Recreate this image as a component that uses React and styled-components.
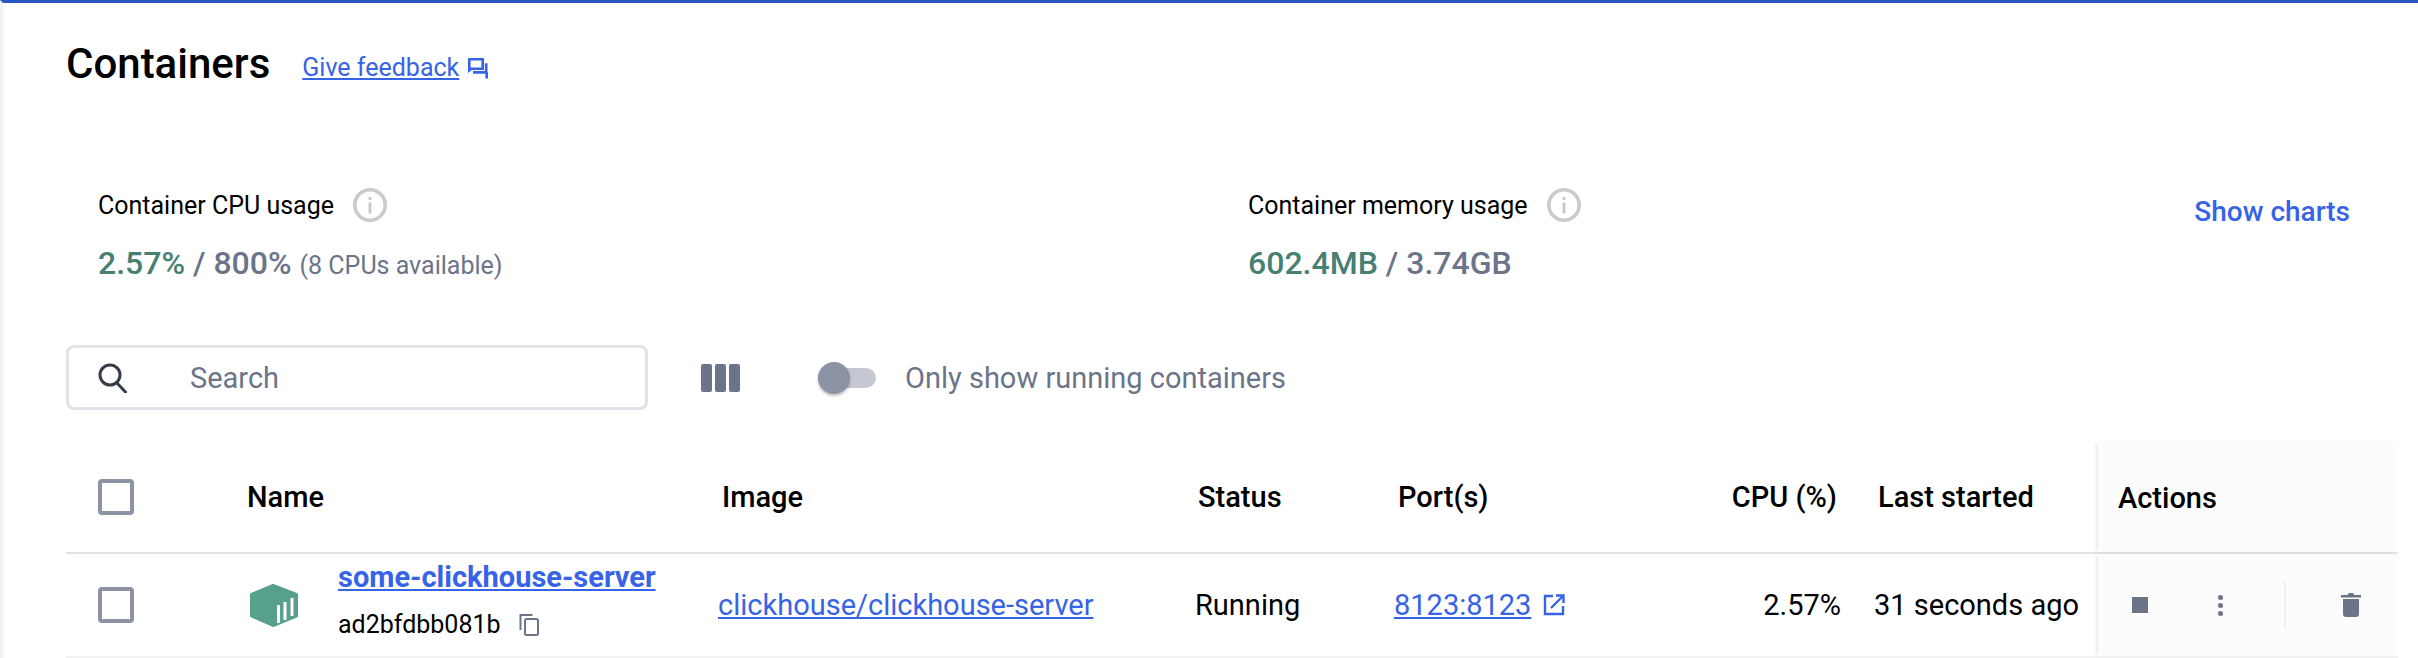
import React from 'react';
import styled, { createGlobalStyle } from 'styled-components';

const GlobalStyle = createGlobalStyle`
  html, body {
    margin: 0;
    background: #fff;
    overflow: hidden;
  }
  body {
    font-family: Roboto, "Liberation Sans", sans-serif;
    color: #000;
  }
`;

const COLUMNS = '181px 471px 477px 199px 240px 235px 229px 300px';
const BLUE = '#3763e6';
const SLATE = '#6b7489';

const Page = styled.div`
  width: 2418px;
  height: 658px;
  box-sizing: border-box;
  border-top: 3px solid #2a55c5;
  border-left: 3px solid #f3f3f3;
  padding: 37px 20px 0 63px;
  overflow: hidden;
`;

const Heading = styled.div`
  display: flex;
  align-items: center;
  height: 48px;
`;

const Title = styled.h1`
  margin: 0;
  font-size: 42px;
  line-height: 48px;
  font-weight: 500;
  letter-spacing: 0;
`;

const Feedback = styled.a`
  display: flex;
  align-items: center;
  gap: 9px;
  margin: 8px 0 0 32px;
  color: ${BLUE};
  font-size: 25px;
  line-height: 30px;
  span {
    text-decoration: underline;
  }
`;

const Stats = styled.div`
  display: flex;
  margin-top: 100px;
  padding: 0 48px 0 32px;
`;

const Stat = styled.div`
  width: ${props => props.$width}px;
`;

const StatLabel = styled.div`
  display: flex;
  align-items: center;
  gap: 19px;
  height: 34px;
  font-size: 25px;
`;

const StatValue = styled.div`
  margin-top: 21px;
  height: 40px;
  line-height: 40px;
  font-size: 32px;
  font-weight: 500;
  color: ${SLATE};
`;

const Used = styled.span`
  color: #477f72;
`;

const StatNote = styled.span`
  margin-left: 8px;
  font-size: 25px;
  font-weight: 400;
`;

const ShowCharts = styled.a`
  margin-left: auto;
  font-size: 28px;
  line-height: 48px;
  height: 48px;
  font-weight: 500;
  color: ${BLUE};
`;

const Toolbar = styled.div`
  display: flex;
  align-items: center;
  height: 65px;
  margin-top: 62px;
`;

const SearchBox = styled.div`
  display: flex;
  align-items: center;
  width: 582px;
  height: 65px;
  box-sizing: border-box;
  border: 3px solid #e2e3e8;
  border-radius: 8px;
  padding-left: 29px;
  gap: 62px;
  font-size: 29px;
  color: ${SLATE};
`;

const ColumnsButton = styled.div`
  display: flex;
  gap: 3px;
  margin-left: 53px;
`;

const ColumnBar = styled.span`
  width: 11px;
  height: 28px;
  border-radius: 2px;
  background: ${SLATE};
`;

const Toggle = styled.div`
  position: relative;
  width: 58px;
  height: 20px;
  margin-left: 78px;
  border-radius: 10px;
  background: #c5c8d3;
`;

const ToggleThumb = styled.span`
  position: absolute;
  left: 0;
  top: -6px;
  width: 32px;
  height: 32px;
  border-radius: 50%;
  background: #8b93a5;
  box-shadow: 0 2px 3px rgba(0, 0, 0, 0.25);
`;

const ToggleLabel = styled.span`
  margin-left: 29px;
  font-size: 29px;
  color: ${SLATE};
`;

const TableRow = styled.div`
  display: grid;
  grid-template-columns: ${COLUMNS};
  height: ${props => props.$height}px;
  border-bottom: ${props => props.$line};
`;

const Table = styled.div`
  margin-top: 32px;
`;

const Cell = styled.div`
  display: flex;
  align-items: center;
  justify-content: ${props => (props.$right ? 'flex-end' : 'flex-start')};
  padding-left: ${props => props.$left || 0}px;
  padding-right: ${props => props.$pad || 0}px;
  font-size: 29px;
  font-weight: ${props => (props.$head ? 500 : 400)};
  white-space: nowrap;
`;

const ActionsCell = styled.div`
  display: flex;
  align-items: center;
  padding-left: ${props => props.$left || 0}px;
  padding-top: ${props => props.$top || 0}px;
  background: #fcfcfc;
  box-shadow: -3px 0 4px -2px rgba(0, 0, 0, 0.14);
  font-size: 29px;
  font-weight: 500;
`;

const Checkbox = styled.span`
  width: 36px;
  height: 36px;
  box-sizing: border-box;
  border: 4px solid #8b93a5;
  border-radius: 4px;
`;

const NameStack = styled.div`
  display: flex;
  flex-direction: column;
  gap: 16px;
  margin: 0 0 8px 40px;
`;

const NameLink = styled.a`
  font-size: 29px;
  line-height: 32px;
  font-weight: 700;
  color: ${BLUE};
  text-decoration: underline;
`;

const IdLine = styled.div`
  display: flex;
  align-items: center;
  gap: 18px;
  font-size: 25px;
  line-height: 32px;
`;

const TextLink = styled.a`
  color: ${BLUE};
  text-decoration: underline;
`;

const PortLink = styled.div`
  display: flex;
  align-items: center;
  gap: 12px;
`;

const StopButton = styled.span`
  width: 16px;
  height: 16px;
  background: ${SLATE};
`;

const Dots = styled.div`
  display: flex;
  flex-direction: column;
  gap: 3px;
  margin-left: 70px;
`;

const Dot = styled.span`
  width: 5px;
  height: 5px;
  border-radius: 50%;
  background: ${SLATE};
`;

const ActionDivider = styled.span`
  width: 2px;
  height: 48px;
  margin-left: 61px;
  background: #f0f0f0;
`;

const TrashButton = styled.span`
  display: flex;
  margin-left: 55px;
`;

const InfoIcon = () => (
  <svg width="34" height="34" viewBox="0 0 34 34">
    <circle cx="17" cy="17" r="15.2" fill="none" stroke="#cbcbcb" strokeWidth="3.6" />
    <rect x="15.5" y="14.5" width="3" height="11" fill="#cbcbcb" />
    <rect x="15.5" y="9" width="3" height="3" fill="#cbcbcb" />
  </svg>
);

const FeedbackIcon = () => (
  <svg width="20" height="21" viewBox="0 0 20 21" fill="none" stroke={BLUE} strokeWidth="2.6">
    <path d="M1.300 1.300h13.400v9.400H3.200l-1.900 1.500z" />
    <path d="M5 14.400h13.200V5.200M18.700 14v6.500" />
  </svg>
);

const SearchIcon = () => (
  <svg width="30" height="30" viewBox="0 0 30 30" fill="none" stroke="#353c4a" strokeWidth="3">
    <circle cx="12" cy="12" r="10" />
    <path d="M18.500 19.500l9 9.500" strokeLinecap="round" />
  </svg>
);

const ContainerIcon = () => (
  <svg width="48" height="43" viewBox="0 0 48 43">
    <path d="M23 1.500L46.500 10.500V32L23 41.500L1.500 32V10.500Z" fill="#58a08e" stroke="#58a08e" strokeWidth="3" strokeLinejoin="round" />
    <path d="M28.500 21v18M35 18v18M42 14v18" stroke="#fff" strokeWidth="3" />
  </svg>
);

const CopyIcon = () => (
  <svg width="20" height="22" viewBox="0 0 20 22" fill="none" stroke={SLATE} strokeWidth="2">
    <rect x="6" y="5" width="13" height="16" rx="1.500" />
    <path d="M1.500 16V1h12" />
  </svg>
);

const ExternalIcon = () => (
  <svg width="22" height="22" viewBox="0 0 22 22" fill="none" stroke={BLUE} strokeWidth="2.400">
    <path d="M10 2H2v18h18v-8" />
    <path d="M8 14L20 2M13 1.500h7.500V9" />
  </svg>
);

const TrashIcon = () => (
  <svg width="20" height="24" viewBox="0 0 20 24">
    <path d="M0 2h6.500L8 0h4l1.500 2H20v2.500H0z" fill={SLATE} />
    <path d="M2 6h16v15a3 3 0 0 1-3 3H5a3 3 0 0 1-3-3z" fill={SLATE} />
  </svg>
);

const App = () => (
  <Page>
    <GlobalStyle />

    <Heading>
      <Title>Containers</Title>
      <Feedback>
        <span>Give feedback</span>
        <FeedbackIcon />
      </Feedback>
    </Heading>

    <Stats>
      <Stat $width={1150}>
        <StatLabel>
          Container CPU usage
          <InfoIcon />
        </StatLabel>
        <StatValue>
          <Used>2.57%</Used> / 800%
          <StatNote>(8 CPUs available)</StatNote>
        </StatValue>
      </Stat>
      <Stat $width={400}>
        <StatLabel>
          Container memory usage
          <InfoIcon />
        </StatLabel>
        <StatValue>
          <Used>602.4MB</Used> / 3.74GB
        </StatValue>
      </Stat>
      <ShowCharts>Show charts</ShowCharts>
    </Stats>

    <Toolbar>
      <SearchBox>
        <SearchIcon />
        Search
      </SearchBox>
      <ColumnsButton>
        <ColumnBar />
        <ColumnBar />
        <ColumnBar />
      </ColumnsButton>
      <Toggle>
        <ToggleThumb />
      </Toggle>
      <ToggleLabel>Only show running containers</ToggleLabel>
    </Toolbar>

    <Table>
      <TableRow $height={110} $line="2px solid #e2e2e2">
        <Cell $left={32}><Checkbox /></Cell>
        <Cell $head>Name</Cell>
        <Cell $head $left={4}>Image</Cell>
        <Cell $head $left={3}>Status</Cell>
        <Cell $head $left={4}>Port(s)</Cell>
        <Cell $head $right $pad={32}>CPU (%)</Cell>
        <Cell $head $left={9}>Last started</Cell>
        <ActionsCell $left={20} $top={2}>Actions</ActionsCell>
      </TableRow>

      <TableRow $height={102} $line="2px solid #f2f2f4">
        <Cell $left={32}><Checkbox /></Cell>
        <Cell $left={3}>
          <ContainerIcon />
          <NameStack>
            <NameLink>some-clickhouse-server</NameLink>
            <IdLine>
              ad2bfdbb081b
              <CopyIcon />
            </IdLine>
          </NameStack>
        </Cell>
        <Cell><TextLink>clickhouse/clickhouse-server</TextLink></Cell>
        <Cell>Running</Cell>
        <Cell>
          <PortLink>
            <TextLink>8123:8123</TextLink>
            <ExternalIcon />
          </PortLink>
        </Cell>
        <Cell $right $pad={28}>2.57%</Cell>
        <Cell $left={5}>31 seconds ago</Cell>
        <ActionsCell $left={34}>
          <StopButton />
          <Dots>
            <Dot />
            <Dot />
            <Dot />
          </Dots>
          <ActionDivider />
          <TrashButton><TrashIcon /></TrashButton>
        </ActionsCell>
      </TableRow>
    </Table>
  </Page>
);

export default App;
